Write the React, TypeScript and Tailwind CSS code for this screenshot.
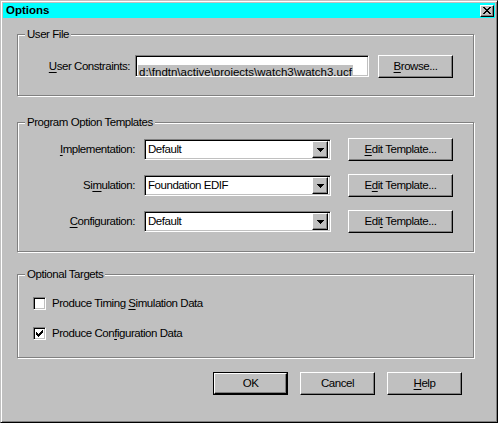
import React from 'react';

const font = "font-['Liberation_Sans',sans-serif] text-[11.5px] tracking-[-0.45px] leading-[15px] text-black";

// pixel glyphs, one string per row
const pixelRects = (rows: string[]) => {
  const out: React.ReactElement[] = [];
  rows.forEach((row, y) => {
    row.split('').forEach((c, x) => {
      if (c === 'X') out.push(<rect key={x + '-' + y} x={x} y={y} width={1} height={1} fill="#000" />);
    });
  });
  return out;
};

const closeGlyph = ['XX....XX', '.XX..XX.', '..XXXX..', '...XX...', '..XXXX..', '.XX..XX.', 'XX....XX'];
const arrowGlyph = ['XXXXXXX', '.XXXXX.', '..XXX..', '...X...'];
const checkGlyph = ['......X', '.....XX', 'X...XXX', 'XX.XXX.', 'XXXXX..', '.XXX...', '..X....'];

const Acc = ({ children }: { children: React.ReactNode }) => (
  <span className="underline underline-offset-[2px] decoration-1">{children}</span>
);

const raised = 'bg-[#c0c0c0] border border-t-white border-l-white border-r-black border-b-black shadow-[inset_-1px_-1px_0_#808080]';
const sunken = 'border border-t-[#808080] border-l-[#808080] border-r-white border-b-white shadow-[inset_1px_1px_0_#000,inset_-1px_-1px_0_#c0c0c0]';

const Button = ({ className, children }: { className: string; children: React.ReactNode }) => (
  <button className={`${raised} ${className} flex items-center justify-center ${font}`}>
    <span className="whitespace-nowrap">{children}</span>
  </button>
);

const Group = ({ title, className, children }: { title: string; className: string; children?: React.ReactNode }) => (
  <div className={`border border-[#808080] shadow-[inset_1px_1px_0_#fff,1px_1px_0_#fff] flex flex-col ${className}`}>
    <span className={`-mt-[8px] ml-[7px] h-[15px] px-[2px] w-fit bg-[#c0c0c0] ${font}`}>{title}</span>
    {children}
  </div>
);

const Combo = ({ value }: { value: string }) => (
  <div className={`${sunken} bg-white w-[187px] h-[21px] flex items-center p-[2px]`}>
    <span className={`flex-1 pl-[1px] ${font}`}>{value}</span>
    <div className={`${raised} w-[16px] h-[17px] flex items-center justify-center`}>
      <svg width="7" height="4" viewBox="0 0 7 4" shapeRendering="crispEdges">{pixelRects(arrowGlyph)}</svg>
    </div>
  </div>
);

const TemplateRow = ({ label, value, edit, className }: { label: React.ReactNode; value: string; edit: React.ReactNode; className: string }) => (
  <div className={`flex items-center h-[23px] ${className}`}>
    <span className={`w-[117px] text-right ${font}`}>{label}</span>
    <div className="ml-[9px]">
      <Combo value={value} />
    </div>
    <Button className="ml-[17px] w-[105px] h-[23px]">{edit}</Button>
  </div>
);

const Check = ({ checked, label, className }: { checked: boolean; label: React.ReactNode; className: string }) => (
  <div className={`flex items-center ml-[15px] h-[13px] ${className}`}>
    <div className={`${sunken} bg-white w-[13px] h-[13px] flex items-center justify-center`}>
      {checked && (
        <svg width="7" height="7" viewBox="0 0 7 7" shapeRendering="crispEdges">{pixelRects(checkGlyph)}</svg>
      )}
    </div>
    <span className={`ml-[6px] ${font}`}>{label}</span>
  </div>
);

export default function App() {
  return (
    <div className="w-[498px] h-[423px] bg-[#c0c0c0] border border-t-[#c0c0c0] border-l-[#c0c0c0] border-r-black border-b-black shadow-[inset_1px_1px_0_#fff,inset_-1px_-1px_0_#808080] p-[2px] flex flex-col">
      {/* title bar */}
      <div className="h-[15px] bg-[#00ffff] flex items-center pl-[3px] pr-[1px]">
        <span className="flex-1 font-['Liberation_Sans',sans-serif] font-bold text-[11.5px] leading-[13px] text-black">Options</span>
        <div className={`${raised} w-[14px] h-[12px] flex items-center justify-center`}>
          <svg width="8" height="7" viewBox="0 0 8 7" shapeRendering="crispEdges">{pixelRects(closeGlyph)}</svg>
        </div>
      </div>

      <Group title="User File" className="mt-[16px] ml-[14px] w-[457px] h-[62px]">
        <div className="flex items-start mt-[13px]">
          <span className={`w-[112px] h-[22px] flex items-center justify-end ${font}`}>
            <span>
              <Acc>U</Acc>ser Constraints:
            </span>
          </span>
          <div className={`${sunken} bg-white ml-[5px] w-[234px] h-[22px] pl-[2px] pt-[2px] overflow-hidden`}>
            <span className="inline-block bg-[#c0c0c0] px-[1px] h-[16px] leading-[15px] whitespace-nowrap font-['Liberation_Sans',sans-serif] text-[11.5px] text-black">
              d:\fndtn\active\projects\watch3\watch3.ucf
            </span>
          </div>
          <Button className="ml-[9px] w-[75px] h-[23px]">
            <Acc>B</Acc>rowse...
          </Button>
        </div>
      </Group>

      <Group title="Program Option Templates" className="mt-[26px] ml-[14px] w-[457px] h-[130px]">
        <TemplateRow
          className="mt-[8px]"
          label={<><Acc>I</Acc>mplementation:</>}
          value="Default"
          edit={<><Acc>E</Acc>dit Template...</>}
        />
        <TemplateRow
          className="mt-[13px]"
          label={<>Si<Acc>m</Acc>ulation:</>}
          value="Foundation EDIF"
          edit={<>E<Acc>d</Acc>it Template...</>}
        />
        <TemplateRow
          className="mt-[13px]"
          label={<><Acc>C</Acc>onfiguration:</>}
          value="Default"
          edit={<>Edi<Acc>t</Acc> Template...</>}
        />
      </Group>

      <Group title="Optional Targets" className="mt-[22px] ml-[14px] w-[457px] h-[84px]">
        <Check className="mt-[15px]" checked={false} label={<>Produce Timing <Acc>S</Acc>imulation Data</>} />
        <Check className="mt-[17px]" checked={true} label={<>Produce Con<Acc>f</Acc>iguration Data</>} />
      </Group>

      <div className="flex justify-end gap-[12px] pr-[33px] mt-[14px]">
        <div className="border border-black w-[75px] h-[23px] flex">
          <Button className="w-full h-full">OK</Button>
        </div>
        <Button className="w-[75px] h-[23px]">Cancel</Button>
        <Button className="w-[75px] h-[23px]">
          <Acc>H</Acc>elp
        </Button>
      </div>
    </div>
  );
}
